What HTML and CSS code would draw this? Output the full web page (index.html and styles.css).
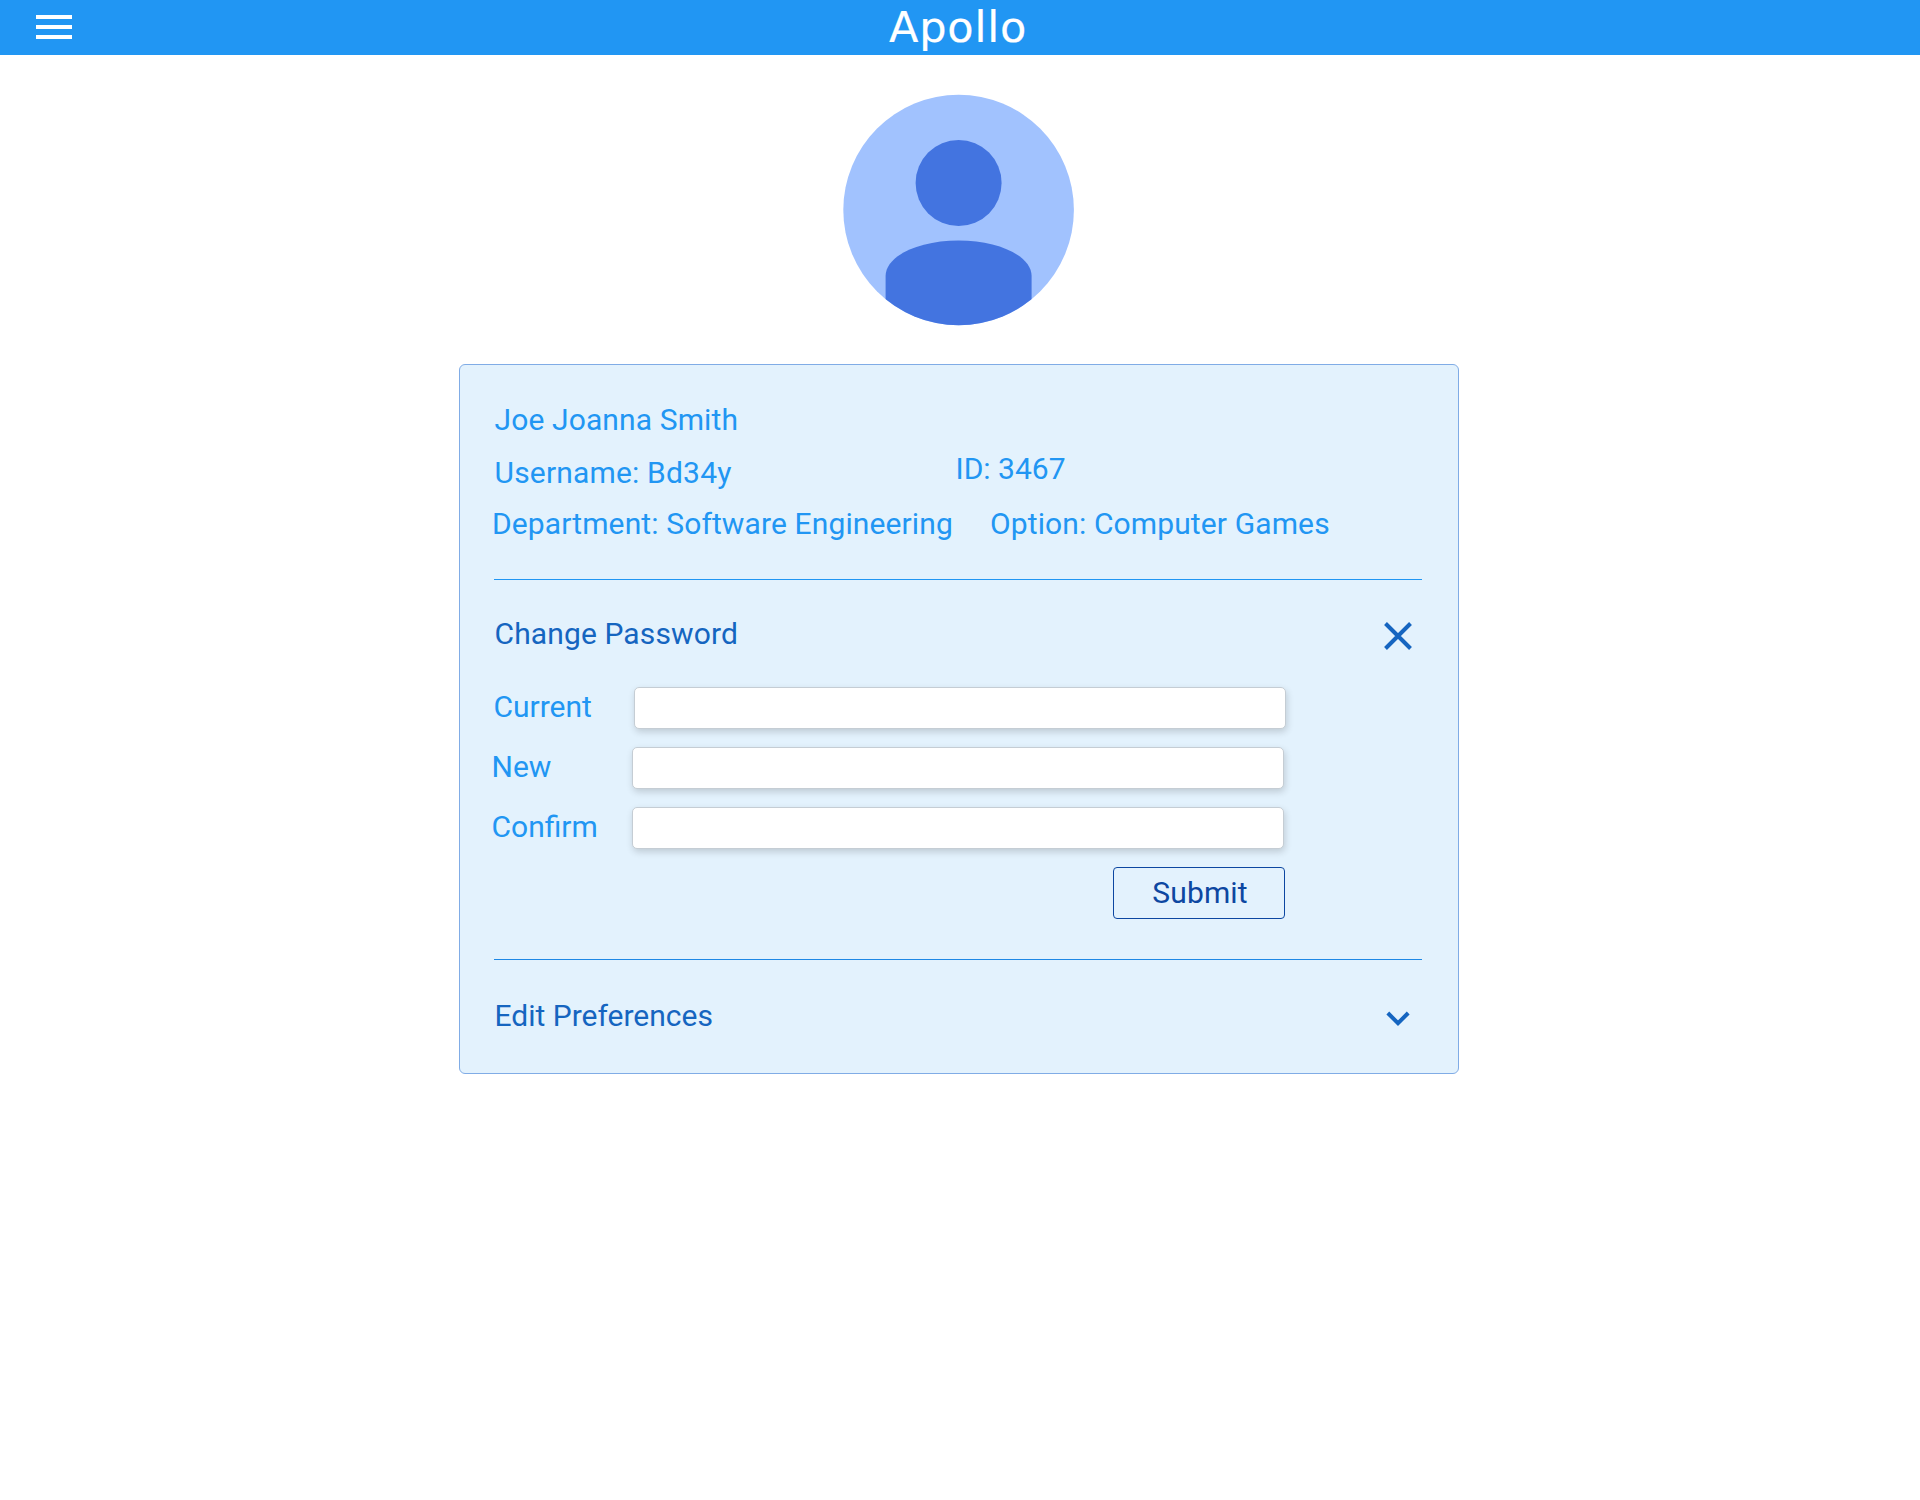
FILE: index.html
```html
<!DOCTYPE html>
<html lang="en">
<head>
<meta charset="utf-8">
<title>Apollo</title>
<link rel="stylesheet" href="styles.css">
</head>
<body>
<header class="topbar">
  <svg class="menu" viewBox="0 0 36 24" aria-label="Menu"><path d="M0 0h36v4H0zM0 10h36v4H0zM0 20h36v4H0z"/></svg>
  <h1 class="brand">Apollo</h1>
</header>
<main class="page">
  <svg class="avatar" viewBox="-0.6 0 232 232" aria-label="Profile picture">
    <defs><clipPath id="disc"><circle cx="116" cy="116" r="115.3"/></clipPath></defs>
    <circle cx="116" cy="116" r="115.3" fill="#a1c2fe"/>
    <g clip-path="url(#disc)" fill="#4374e0">
      <circle cx="116" cy="89" r="43"/>
      <path d="M43 232V182C43 162 76 146.500 116 146.500S189 162 189 182V232z"/>
    </g>
  </svg>
  <section class="card">
    <div class="info">
      <p class="row name"><span class="t-name">Joe Joanna Smith</span></p>
      <p class="row user"><span class="t-user">Username: Bd34y</span><span class="t-id">ID: 3467</span></p>
      <p class="row dept"><span class="t-dept">Department: Software Engineering</span><span class="t-option">Option: Computer Games</span></p>
    </div>
    <form class="password">
      <div class="head">
        <h2 class="title">Change Password</h2>
        <svg class="close" viewBox="0 0 28 28"><path d="M1.500 1.500L26.500 26.500M26.500 1.500L1.500 26.500"/></svg>
      </div>
      <label class="field first"><span class="label">Current</span><input class="input" type="password"></label>
      <label class="field"><span class="label">New</span><input class="input" type="password"></label>
      <label class="field"><span class="label">Confirm</span><input class="input" type="password"></label>
      <button class="submit" type="button">Submit</button>
    </form>
    <div class="head preferences">
      <h2 class="title">Edit Preferences</h2>
      <svg class="chevron" viewBox="0 0 24 16"><path d="M1.800 2L12 12.200L22.200 2"/></svg>
    </div>
  </section>
</main>
</body>
</html>
```
FILE: styles.css
```css
* { box-sizing: border-box; }
body {
  margin: 0;
  background: #fff;
  color: #2196f3;
  font: 30px/36px Roboto, sans-serif;
  letter-spacing: .12px;
}
h1, h2, p { margin: 0; font-weight: 400; }
.topbar {
  display: grid;
  grid-template-columns: 36px 1fr 36px;
  align-items: start;
  height: 55px;
  padding: 0 36px;
  background: #2196f3;
}
.menu { width: 36px; height: 24px; margin-top: 15px; fill: #fff; }
.brand {
  padding-right: 4px;
  color: #fff;
  font: 43px/54px "DejaVu Sans", sans-serif;
  letter-spacing: .8px;
  text-align: center;
  -webkit-text-stroke: .2px #fff;
}
.page { display: flex; flex-direction: column; align-items: center; padding-top: 39px; }
.avatar { width: 232px; height: 232px; margin-right: 4px; }
.card {
  width: 1000px;
  height: 710px;
  margin: 38px 2px 0 0;
  padding: 0 36px 0 34px;
  background: #e3f2fd;
  border: 1px solid #80ace6;
  border-radius: 6px;
}
.info { height: 215px; padding-top: 37px; border-bottom: 1px solid #2196f3; }
.row { display: flex; white-space: nowrap; }
.name, .user { padding-left: .5px; }
.user { padding-top: 17px; }
.dept { padding-top: 15px; margin-left: -2px; }
.t-user { width: 461px; letter-spacing: .18px; }
.t-id { margin: -4px 0 4px; letter-spacing: 0; }
.t-dept { width: 498px; }
.password { height: 380px; padding-top: 36px; border-bottom: 1px solid #1e88e5; }
.head { display: flex; justify-content: space-between; color: #1565c0; }
.title { padding-left: .5px; font-size: 30px; }
.close { width: 28px; height: 28px; margin: 6px 10px 0 0; }
.close path, .chevron path { fill: none; stroke: #1565c0; stroke-width: 4; }
.field { display: flex; width: 792px; margin: 18px 0 0 -3px; }
.field.first { margin: 35px 0 0 -1px; }
.label { width: 141px; flex: none; padding: 2px 0 0 .5px; letter-spacing: 0; }
.input {
  flex: none;
  width: 652px;
  height: 42px;
  border: 1px solid #c5cdd4;
  border-radius: 5px;
  background: #fff;
  box-shadow: 1px 3px 7px rgba(0, 0, 0, .16);
}
.submit {
  display: block;
  width: 172px;
  height: 52px;
  margin: 18px 0 0 619px;
  padding: 0 0 0 2px;
  border: 1px solid #0d47a1;
  border-radius: 4px;
  background: transparent;
  color: #0d47a1;
  font: inherit;
  letter-spacing: inherit;
}
.preferences { padding-top: 38px; }
.preferences .title { letter-spacing: 0; }
.chevron { width: 24px; height: 16px; margin: 13px 12px 0 0; }
```
